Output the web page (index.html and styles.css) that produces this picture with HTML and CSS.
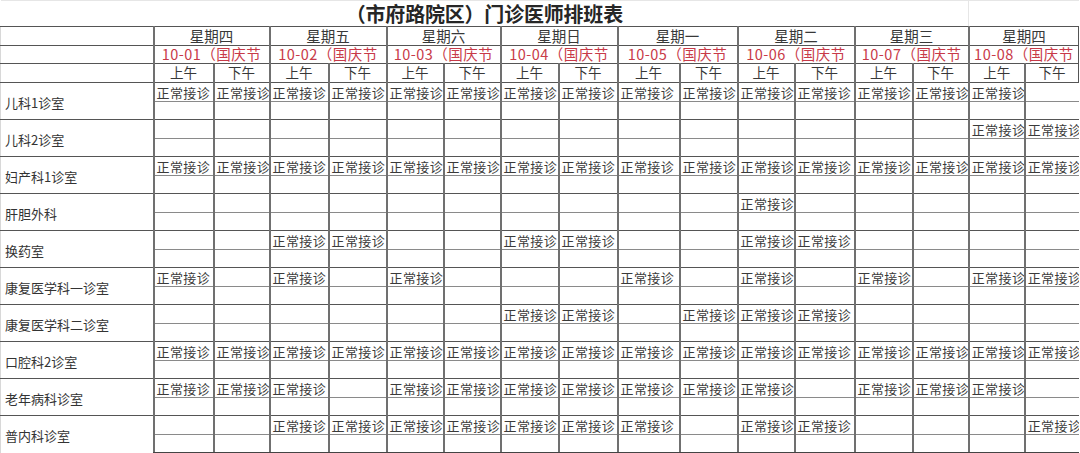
FILE: index.html
```html
<!DOCTYPE html>
<html lang="zh-CN">
<head>
<meta charset="utf-8">
<title>门诊医师排班表</title>
<link rel="stylesheet" href="styles.css">
</head>
<body>
<table class="sheet">
<colgroup>
<col class="c0"><col class="w60"><col class="w56"><col class="w59"><col class="w58"><col class="w57"><col class="w57"><col class="w58"><col class="w59"><col class="w62"><col class="w58"><col class="w57"><col class="w60"><col class="w58"><col class="w56"><col class="w56"><col class="w54">
</colgroup>
<thead>
<tr class="title-row"><th class="title" colspan="15">（市府路院区）门诊医师排班表</th><th class="title-end" colspan="2"></th></tr>
<tr class="hrow week"><th class="corner"></th><th colspan="2">星期四</th><th colspan="2">星期五</th><th colspan="2">星期六</th><th colspan="2">星期日</th><th colspan="2">星期一</th><th colspan="2">星期二</th><th colspan="2">星期三</th><th colspan="2">星期四</th></tr>
<tr class="hrow date"><th class="corner"></th><th colspan="2">10-01（国庆节</th><th colspan="2">10-02（国庆节</th><th colspan="2">10-03（国庆节</th><th colspan="2">10-04（国庆节</th><th colspan="2">10-05（国庆节</th><th colspan="2">10-06（国庆节</th><th colspan="2">10-07（国庆节</th><th colspan="2">10-08（国庆节</th></tr>
<tr class="hrow half"><th class="corner"></th><th>上午</th><th>下午</th><th>上午</th><th>下午</th><th>上午</th><th>下午</th><th>上午</th><th>下午</th><th>上午</th><th>下午</th><th>上午</th><th>下午</th><th>上午</th><th>下午</th><th>上午</th><th>下午</th></tr>
</thead>
<tbody>
<tr class="r1"><th class="dept" rowspan="2">儿科1诊室</th><td>正常接诊</td><td>正常接诊</td><td>正常接诊</td><td>正常接诊</td><td>正常接诊</td><td>正常接诊</td><td>正常接诊</td><td>正常接诊</td><td>正常接诊</td><td>正常接诊</td><td>正常接诊</td><td>正常接诊</td><td>正常接诊</td><td>正常接诊</td><td>正常接诊</td><td></td></tr>
<tr class="r2"><td></td><td></td><td></td><td></td><td></td><td></td><td></td><td></td><td></td><td></td><td></td><td></td><td></td><td></td><td></td><td></td></tr>
<tr class="r1"><th class="dept" rowspan="2">儿科2诊室</th><td></td><td></td><td></td><td></td><td></td><td></td><td></td><td></td><td></td><td></td><td></td><td></td><td></td><td></td><td>正常接诊</td><td>正常接诊</td></tr>
<tr class="r2"><td></td><td></td><td></td><td></td><td></td><td></td><td></td><td></td><td></td><td></td><td></td><td></td><td></td><td></td><td></td><td></td></tr>
<tr class="r1"><th class="dept" rowspan="2">妇产科1诊室</th><td>正常接诊</td><td>正常接诊</td><td>正常接诊</td><td>正常接诊</td><td>正常接诊</td><td>正常接诊</td><td>正常接诊</td><td>正常接诊</td><td>正常接诊</td><td>正常接诊</td><td>正常接诊</td><td>正常接诊</td><td>正常接诊</td><td>正常接诊</td><td>正常接诊</td><td>正常接诊</td></tr>
<tr class="r2"><td></td><td></td><td></td><td></td><td></td><td></td><td></td><td></td><td></td><td></td><td></td><td></td><td></td><td></td><td></td><td></td></tr>
<tr class="r1"><th class="dept" rowspan="2">肝胆外科</th><td></td><td></td><td></td><td></td><td></td><td></td><td></td><td></td><td></td><td></td><td>正常接诊</td><td></td><td></td><td></td><td></td><td></td></tr>
<tr class="r2"><td></td><td></td><td></td><td></td><td></td><td></td><td></td><td></td><td></td><td></td><td></td><td></td><td></td><td></td><td></td><td></td></tr>
<tr class="r1"><th class="dept" rowspan="2">换药室</th><td></td><td></td><td>正常接诊</td><td>正常接诊</td><td></td><td></td><td>正常接诊</td><td>正常接诊</td><td></td><td></td><td>正常接诊</td><td>正常接诊</td><td></td><td></td><td></td><td></td></tr>
<tr class="r2"><td></td><td></td><td></td><td></td><td></td><td></td><td></td><td></td><td></td><td></td><td></td><td></td><td></td><td></td><td></td><td></td></tr>
<tr class="r1"><th class="dept" rowspan="2">康复医学科一诊室</th><td>正常接诊</td><td></td><td>正常接诊</td><td></td><td>正常接诊</td><td></td><td></td><td></td><td>正常接诊</td><td></td><td>正常接诊</td><td></td><td>正常接诊</td><td></td><td>正常接诊</td><td>正常接诊</td></tr>
<tr class="r2"><td></td><td></td><td></td><td></td><td></td><td></td><td></td><td></td><td></td><td></td><td></td><td></td><td></td><td></td><td></td><td></td></tr>
<tr class="r1"><th class="dept" rowspan="2">康复医学科二诊室</th><td></td><td></td><td></td><td></td><td></td><td></td><td>正常接诊</td><td>正常接诊</td><td></td><td>正常接诊</td><td>正常接诊</td><td>正常接诊</td><td></td><td></td><td></td><td></td></tr>
<tr class="r2"><td></td><td></td><td></td><td></td><td></td><td></td><td></td><td></td><td></td><td></td><td></td><td></td><td></td><td></td><td></td><td></td></tr>
<tr class="r1"><th class="dept" rowspan="2">口腔科2诊室</th><td>正常接诊</td><td>正常接诊</td><td>正常接诊</td><td>正常接诊</td><td>正常接诊</td><td>正常接诊</td><td>正常接诊</td><td>正常接诊</td><td>正常接诊</td><td>正常接诊</td><td>正常接诊</td><td>正常接诊</td><td>正常接诊</td><td>正常接诊</td><td>正常接诊</td><td>正常接诊</td></tr>
<tr class="r2"><td></td><td></td><td></td><td></td><td></td><td></td><td></td><td></td><td></td><td></td><td></td><td></td><td></td><td></td><td></td><td></td></tr>
<tr class="r1"><th class="dept" rowspan="2">老年病科诊室</th><td>正常接诊</td><td>正常接诊</td><td>正常接诊</td><td></td><td>正常接诊</td><td>正常接诊</td><td>正常接诊</td><td>正常接诊</td><td>正常接诊</td><td>正常接诊</td><td>正常接诊</td><td></td><td>正常接诊</td><td>正常接诊</td><td>正常接诊</td><td></td></tr>
<tr class="r2"><td></td><td></td><td></td><td></td><td></td><td></td><td></td><td></td><td></td><td></td><td></td><td></td><td></td><td></td><td></td><td></td></tr>
<tr class="r1"><th class="dept" rowspan="2">普内科诊室</th><td></td><td></td><td>正常接诊</td><td>正常接诊</td><td>正常接诊</td><td>正常接诊</td><td>正常接诊</td><td>正常接诊</td><td>正常接诊</td><td></td><td>正常接诊</td><td>正常接诊</td><td></td><td></td><td></td><td>正常接诊</td></tr>
<tr class="r2 last"><td></td><td></td><td></td><td></td><td></td><td></td><td></td><td></td><td></td><td></td><td></td><td></td><td></td><td></td><td></td><td></td></tr>
</tbody>
</table>
</body>
</html>
```

FILE: styles.css
```css
html, body {
  margin: 0;
  padding: 0;
  background: #ffffff;
}

body {
  font-family: "Noto Sans CJK SC", "Noto Sans", sans-serif;
  color: #333333;
}

.sheet {
  border-collapse: collapse;
  table-layout: fixed;
  width: 1078px;
}

.c0 { width: 153px; }
.w54 { width: 54px; }
.w56 { width: 56px; }
.w57 { width: 57px; }
.w58 { width: 58px; }
.w59 { width: 59px; }
.w60 { width: 60px; }
.w62 { width: 62px; }

.sheet th,
.sheet td {
  padding: 0;
  overflow: hidden;
  white-space: nowrap;
  font-weight: normal;
  line-height: 1;
}

.title-row th {
  height: 25px;
  border-top: 1px solid #e6e6e6;
  border-bottom: 1px solid #555555;
}

.sheet .title {
  font-size: 20px;
  font-weight: bold;
  color: #262626;
  text-align: center;
  letter-spacing: -0.2px;
  overflow: visible;
}

.title-end {
  border-left: 1px solid #e6e6e6;
}

.hrow th {
  font-size: 14.5px;
  color: #383838;
  text-align: center;
  border: 1px solid #555555;
  border-left: 2px solid #707070;
}

.week th {
  height: 18px;
}

.date th {
  height: 17px;
  color: #c83a48;
  font-size: 14.5px;
  letter-spacing: 0.5px;
}

.half th {
  height: 18px;
  font-size: 13.5px;
}

.hrow .corner {
  border-left: 1px solid #d8d8d8;
}

.r1 td,
.r2 td {
  font-size: 13px;
  letter-spacing: 0.4px;
  color: #3a3a3a;
  padding-left: 2px;
  border-left: 2px solid #707070;
}

.r1 td {
  height: 18px;
  border-bottom: 1px solid #8a8a8a;
  vertical-align: middle;
}

.r2 td {
  height: 17px;
  border-bottom: 1px solid #555555;
}

.sheet .dept {
  text-align: left;
  font-size: 13px;
  color: #333333;
  padding-left: 4px;
  padding-top: 2px;
  border-bottom: 1px solid #555555;
  border-left: 1px solid #d8d8d8;
}

.last td {
  border-bottom: 2px solid #444444;
}
```
